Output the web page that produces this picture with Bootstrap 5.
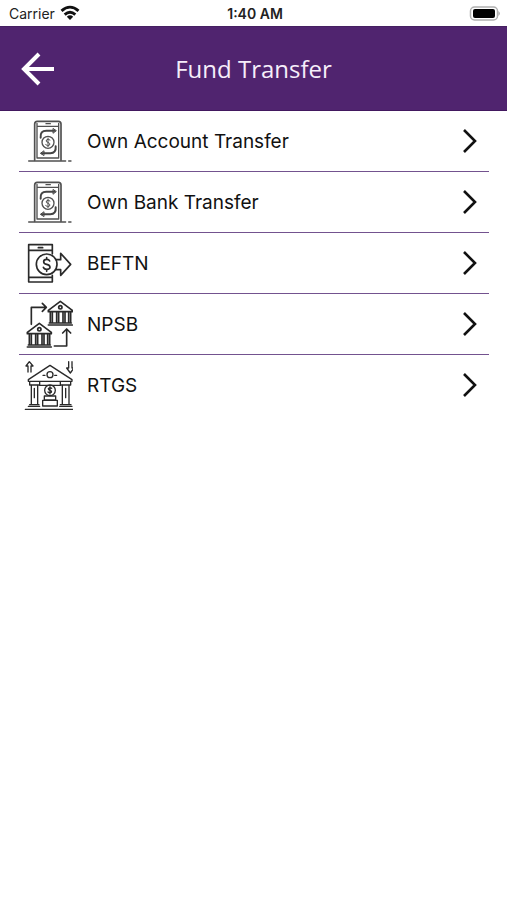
<!DOCTYPE html>
<html lang="en">
<head>
<meta charset="utf-8">
<meta name="viewport" content="width=device-width, initial-scale=1">
<title>Fund Transfer</title>
<link href="https://cdn.jsdelivr.net/npm/bootstrap@5.3.0/dist/css/bootstrap.min.css" rel="stylesheet">
<style>
  body { font-family: Inter, "Liberation Sans", sans-serif; color: #111; }
  svg { fill: none; display: block; flex: none; }
  .status { height: 26px; font-size: 14px; line-height: 26px; padding: 1px 6px 0 9px; color: #222; }
  .status .clock { font-weight: 600; }
  .app-head { background: #50246f; height: 85px; border-top: 1px solid #452061; border-bottom: 1px solid #42185f; }
  .app-head h1 { font: 400 24px/34px "Open Sans", sans-serif; color: #f6eefa; }
  .back { width: 76px; height: 83px; }
  .side { width: 76px; }
  .menu { padding: 0 18px 0 19px; }
  .menu-row { height: 61px; font-size: 19px; line-height: 28px; color: #111; gap: 14px; padding-right: 10px; border-bottom: 1px solid #73528f; }
  .menu-row span { padding-top: 2px; }
  .menu-row.last { border-bottom-color: transparent; }
  .pic { stroke: #2a2a2a; stroke-width: 5; stroke-linejoin: round; stroke-linecap: round; }
</style>
</head>
<body class="bg-white">
<svg width="0" height="0" class="position-absolute" aria-hidden="true">
  <defs>
    <symbol id="phone" viewBox="12 -3 162 180">
      <g stroke="#505050">
        <path d="M41 147H152M161 147H168" stroke-width="4"/>
        <path d="M59 145V36Q59 28 67 28H130Q138 28 138 36V145" stroke-width="5"/>
        <path d="M66 138V43H131V138ZM66 34V43M131 34V43" stroke-width="4"/>
        <path d="M93 35H106" stroke-width="4"/>
        <circle cx="99" cy="91" r="18" stroke-width="4"/>
        <path d="M105 84Q99 79 94 84Q92 90 99 91Q107 94 104 99Q98 104 92 98M99 78V104" stroke-width="3"/>
        <path d="M77 77Q75 56 94 56H119" stroke="#444" stroke-width="6"/>
        <path d="M115 50L124 56L115 63Z" stroke="#444" stroke-width="3"/>
        <path d="M122 103Q124 123 106 124H81" stroke="#444" stroke-width="6"/>
        <path d="M86 117L76 124L86 130Z" stroke="#444" stroke-width="3"/>
      </g>
    </symbol>
    <symbol id="send" viewBox="12 -6 162 180">
      <path d="M112 57V29H41V141H112V121M42 46H111M42 127H111M70 38H83"/>
      <circle cx="95" cy="88" r="31"/>
      <path d="M104 78Q102 73 95 73Q86 73 86 80Q86 86 95 88Q105 90 105 97Q105 103 95 103Q87 103 85 97M95 68V73M95 103V109"/>
      <path d="M123 74H137V55L167 88L137 121V104H123"/>
    </symbol>
    <symbol id="banks" viewBox="12 -6 162 180">
      <g id="bank">
        <path d="M37 109L73 82L109 109V113H37ZM37 153H109M40 147H106M43 114V147M49 114V147M62 114V147M68 114V147M81 114V147M87 114V147M98 114V147M104 114V147"/>
        <circle cx="73" cy="100" r="5"/>
      </g>
      <use href="#bank" x="63" y="-66"/>
      <path d="M49 85V34H92M82 22L94 34L82 46M118 150H155V101M143 111L155 99L167 111"/>
    </symbol>
    <symbol id="vault" viewBox="12 -3 162 180">
      <g stroke-width="4">
        <path d="M31 160H176M40 151H74M134 151H171M44 146H72M136 146H168M40 71L105 28L171 71V76H40ZM44 78V87H74V78M136 78V87H167V78"/>
        <path d="M49 88V145M68 88V145M142 88V145M162 88V145M58 97V125M152 97V125M74 88H136M84 58H90M119 58H125"/>
        <circle cx="105" cy="56" r="9"/>
        <circle cx="105" cy="103" r="16"/>
        <path d="M110 97Q104 92 100 98Q101 102 105 103Q111 105 109 109Q104 113 99 108M105 92V114M88 120H122V132H88ZM83 133H127V150H83Z"/>
        <path d="M39 48V30H33L43 17L54 30H48V48M161 17V36H155L166 51L177 36H171V17"/>
      </g>
    </symbol>
    <symbol id="next" viewBox="0 0 18 28">
      <path d="M3 3L14 14L3 25" stroke="#111" stroke-width="2.600"/>
    </symbol>
  </defs>
</svg>

<div class="status d-flex align-items-center justify-content-between">
  <div class="d-flex align-items-center col">
    <span>Carrier</span>
    <svg class="ms-1" width="22" height="17" viewBox="0 0 20 16" stroke="#111" stroke-width="2.700" aria-label="Wi-Fi" role="img">
      <path d="M2 5.500Q10-1.500 18 5.500M5 9Q10 4.500 15 9"/><path d="M7 11Q10 8.500 13 11L10 14Z" fill="#111" stroke="none"/>
    </svg>
  </div>
  <span class="clock">1:40 AM</span>
  <div class="col d-flex justify-content-end">
    <svg width="32" height="16" viewBox="0 0 32 16" aria-label="Battery full" role="img">
      <rect x="1.500" y="1" width="27" height="13" rx="4" stroke="#b0b0b0" stroke-width="1.500"/>
      <rect x="4" y="3" width="22" height="9" rx="2" fill="#000"/>
      <path d="M29.500 5Q32 7.500 29.500 10Z" fill="#999"/>
    </svg>
  </div>
</div>

<header class="app-head d-flex align-items-center justify-content-between">
  <button type="button" class="back btn p-0 border-0 rounded-0 d-flex align-items-center justify-content-center" aria-label="Back">
    <svg width="36" height="36" viewBox="0 0 36 36" stroke="#fff" stroke-width="4"><path d="M19 3L4 18L19 33M4 18H34"/></svg>
  </button>
  <h1 class="m-0">Fund Transfer</h1>
  <div class="side"></div>
</header>

<main>
  <nav class="menu d-flex flex-column" aria-label="Transfer types">
    <a href="#own-account" class="menu-row d-flex align-items-center text-decoration-none">
      <svg class="pic" width="54" height="60"><use href="#phone"/></svg><span class="flex-grow-1">Own Account Transfer</span><svg width="18" height="28"><use href="#next"/></svg></a>
    <a href="#own-bank" class="menu-row d-flex align-items-center text-decoration-none">
      <svg class="pic" width="54" height="60"><use href="#phone"/></svg><span class="flex-grow-1">Own Bank Transfer</span><svg width="18" height="28"><use href="#next"/></svg></a>
    <a href="#beftn" class="menu-row d-flex align-items-center text-decoration-none">
      <svg class="pic" width="54" height="60"><use href="#send"/></svg><span class="flex-grow-1">BEFTN</span><svg width="18" height="28"><use href="#next"/></svg></a>
    <a href="#npsb" class="menu-row d-flex align-items-center text-decoration-none">
      <svg class="pic" width="54" height="60"><use href="#banks"/></svg><span class="flex-grow-1">NPSB</span><svg width="18" height="28"><use href="#next"/></svg></a>
    <a href="#rtgs" class="menu-row last d-flex align-items-center text-decoration-none">
      <svg class="pic" width="54" height="60"><use href="#vault"/></svg><span class="flex-grow-1">RTGS</span><svg width="18" height="28"><use href="#next"/></svg></a>
  </nav>
</main>
<script src="https://cdn.jsdelivr.net/npm/bootstrap@5.3.0/dist/js/bootstrap.bundle.min.js"></script>
</body>
</html>
